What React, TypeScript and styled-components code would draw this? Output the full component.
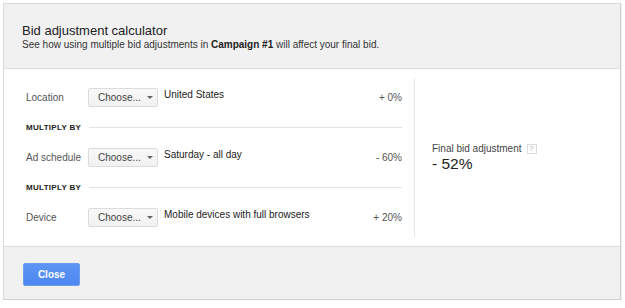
import React from 'react'
import { styled, createGlobalStyle } from 'styled-components'

const GlobalStyle = createGlobalStyle`
  html, body {
    margin: 0;
    padding: 0;
    background: #fff;
    font-family: 'Liberation Sans', Arial, sans-serif;
  }
`

const Dialog = styled.div`
  margin: 3px 0 0 3px;
  width: 616px;
  border: 1px solid #d9d9d9;
  border-right-color: #cfcfcf;
  border-bottom-color: #cfcfcf;
  box-shadow: 1px 1px 1px rgba(0, 0, 0, 0.06);
  background: #f1f1f1;
`

const Header = styled.div`
  padding: 19px 18px 0;
  height: 45px;
  border-bottom: 1px solid #dedede;
  h1 {
    margin: 0;
    font-size: 13px;
    line-height: 15px;
    font-weight: normal;
    color: #222;
  }
  p {
    margin: 1px 0 0;
    font-size: 10px;
    line-height: 12px;
    color: #333;
    b {
      color: #222;
    }
  }
`

const Body = styled.div`
  display: flex;
  background: #fff;
  height: 159px;
  padding: 9px 0;
  border-bottom: 1px solid #dcdcdc;
`

const Rules = styled.div`
  width: 376px;
  padding: 4px 12px 5px 22px;
  border-right: 1px solid #e5e5e5;
  display: flex;
  flex-direction: column;
`

const Row = styled.div`
  display: flex;
  align-items: center;
  height: 30px;
  font-size: 10px;
  color: #555;
`

const Label = styled.span`
  width: 62px;
  flex: none;
`

const ChooseButton = styled.button`
  width: 70px;
  height: 19px;
  padding: 0 0 0 9px;
  text-align: left;
  border: 1px solid #dcdcdc;
  border-radius: 2px;
  background: linear-gradient(#f8f8f8, #f1f1f1);
  font-family: inherit;
  font-size: 10px;
  color: #444;
  display: flex;
  align-items: center;
  gap: 6px;
  &::after {
    content: '';
    border-left: 3px solid transparent;
    border-right: 3px solid transparent;
    border-top: 3px solid #666;
    margin-top: 1px;
  }
`

const Value = styled.span`
  flex: 1;
  margin-left: 6px;
  margin-top: -6px;
  color: #222;
`

const Percent = styled.span`
  color: #555;
`

const Multiply = styled.div`
  display: flex;
  align-items: center;
  gap: 8px;
  height: 30px;
  font-size: 8px;
  font-weight: bold;
  color: #222;
  letter-spacing: 0.3px;
  &::after {
    content: '';
    flex: 1;
    height: 1px;
    background: #e3e3e3;
  }
`

const Result = styled.div`
  flex: 1;
  display: flex;
  flex-direction: column;
  justify-content: center;
  padding: 0 0 0 17px;
`

const ResultLabel = styled.div`
  display: flex;
  align-items: center;
  gap: 5px;
  font-size: 10px;
  color: #444;
  line-height: 12px;
`

const Help = styled.span`
  width: 8px;
  height: 8px;
  border: 1px solid #ddd;
  font-size: 7px;
  line-height: 8px;
  text-align: center;
  color: #aaa;
`

const ResultValue = styled.div`
  font-size: 15.5px;
  line-height: 18px;
  color: #222;
`

const Footer = styled.div`
  height: 36px;
  padding: 16px 19px 0;
`

const CloseButton = styled.button`
  width: 57px;
  height: 23px;
  border: 1px solid #6a9cf0;
  border-radius: 2px;
  background: linear-gradient(#5d95f3, #4d87f0);
  color: #fff;
  font-family: inherit;
  font-weight: bold;
  font-size: 10px;
  padding: 0;
`

const rows = [
  { label: 'Location', value: 'United States', pct: '+ 0%' },
  { label: 'Ad schedule', value: 'Saturday - all day', pct: '- 60%' },
  { label: 'Device', value: 'Mobile devices with full browsers', pct: '+ 20%' },
]

const App = () => {
  return (
    <>
      <GlobalStyle />
      <Dialog>
        <Header>
          <h1>Bid adjustment calculator</h1>
          <p>
            See how using multiple bid adjustments in <b>Campaign #1</b> will affect your final bid.
          </p>
        </Header>
        <Body>
          <Rules>
            {rows.map((r, i) => (
              <React.Fragment key={r.label}>
                {i > 0 && <Multiply>MULTIPLY BY</Multiply>}
                <Row>
                  <Label>{r.label}</Label>
                  <ChooseButton type="button">Choose...</ChooseButton>
                  <Value>{r.value}</Value>
                  <Percent>{r.pct}</Percent>
                </Row>
              </React.Fragment>
            ))}
          </Rules>
          <Result>
            <ResultLabel>
              Final bid adjustment <Help>?</Help>
            </ResultLabel>
            <ResultValue>- 52%</ResultValue>
          </Result>
        </Body>
        <Footer>
          <CloseButton type="button">Close</CloseButton>
        </Footer>
      </Dialog>
    </>
  )
}

export default App
